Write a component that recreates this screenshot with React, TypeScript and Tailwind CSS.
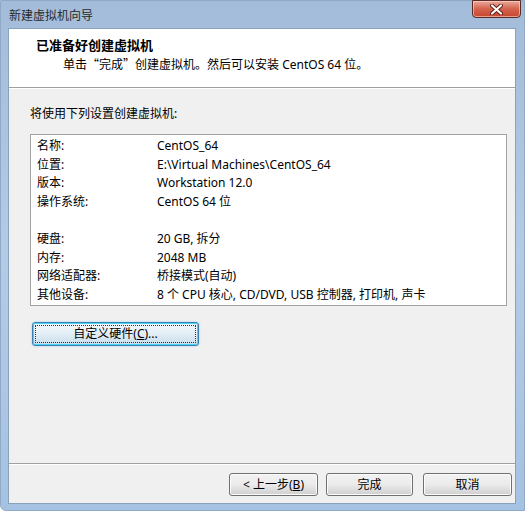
import React from "react";

const FONT = { fontFamily: '"Noto Sans", "Noto Sans CJK SC", sans-serif' };
const CJK = { fontFamily: '"Noto Sans CJK SC", sans-serif' };

const rows: [string, string][] = [
  ["名称:", "CentOS_64"],
  ["位置:", "E:\\Virtual Machines\\CentOS_64"],
  ["版本:", "Workstation 12.0"],
  ["操作系统:", "CentOS 64 位"],
];

const rows2: [string, string][] = [
  ["硬盘:", "20 GB, 拆分"],
  ["内存:", "2048 MB"],
  ["网络适配器:", "桥接模式(自动)"],
  ["其他设备:", "8 个 CPU 核心, CD/DVD, USB 控制器, 打印机, 声卡"],
];

function InfoRow({ label, value }: { label: string; value: string }) {
  return (
    <div className="flex h-[18.5px] items-center">
      <span className="w-[120px] shrink-0">{label}</span>
      <span className="whitespace-nowrap">{value}</span>
    </div>
  );
}

function WizButton({ children }: { children: React.ReactNode }) {
  return (
    <button className="h-[23px] rounded-[3px] border border-[#707070] bg-gradient-to-b from-[#f2f2f2] via-[#ebebeb] to-[#cfcfcf] text-[12px] leading-none text-black shadow-[inset_0_0_0_1px_#fcfcfc]">
      {children}
    </button>
  );
}

export default function App() {
  return (
    <div className="relative h-[519px] w-[525px] overflow-hidden bg-white text-[12px] text-black" style={FONT}>
      <div className="flex h-[511px] w-[525px] flex-col rounded-bl-[6px] border border-[#8fa9c6] bg-gradient-to-b from-[#a3bcd9] via-[#b3cbe5] to-[#a6c2e2] pb-[6px] pl-[7px] pr-[8px]">
        {/* title bar */}
        <div className="relative flex h-[27px] shrink-0 items-center">
          <span className="pl-[1px] pt-[2px] text-[12px] text-[#2a2a2a]">新建虚拟机向导</span>
          <div className="absolute right-[-5px] top-[-1px] flex h-[18px] w-[49px] items-center justify-center rounded-b-[4px] border border-[#5a2a24] bg-gradient-to-b from-[#e9a99c] via-[#d4624d] to-[#c8452e] shadow-[inset_0_0_0_1px_rgba(255,220,210,0.6)]">
            <svg width="13" height="11" viewBox="0 0 13 11">
              <path d="M2 1.5 L11 9.5 M11 1.5 L2 9.5" stroke="#5b1c14" strokeWidth="4" strokeLinecap="round" />
              <path d="M2 1.5 L11 9.5 M11 1.5 L2 9.5" stroke="#ffffff" strokeWidth="2.2" strokeLinecap="round" />
            </svg>
          </div>
        </div>

        {/* client area */}
        <div className="flex flex-1 flex-col border border-[#8aa2bd] bg-[#f0f0f0]">
          <div className="flex h-[59px] shrink-0 flex-col border-b border-[#a0a0a0] bg-white pl-[27px] pt-[6px] shadow-[0_1px_0_#ffffff]">
            <div className="text-[13px] font-bold leading-[20px]">已准备好创建虚拟机</div>
            <div className="pl-[27px] text-[12px] leading-[18px]">
              单击<span style={CJK}>“</span>完成<span style={CJK}>”</span>创建虚拟机。然后可以安装 CentOS 64 位。
            </div>
          </div>

          <div className="flex flex-1 flex-col px-[21px] pr-[8px]">
            <div className="pt-[17px] leading-[18px]">将使用下列设置创建虚拟机:</div>
            <div className="mt-[11px] flex h-[172px] flex-col border border-[#a3a3a3] bg-white pl-[6px] pt-[2px]">
              {rows.map(([l, v]) => (
                <InfoRow key={l} label={l} value={v} />
              ))}
              <div className="h-[19px]" />
              {rows2.map(([l, v]) => (
                <InfoRow key={l} label={l} value={v} />
              ))}
            </div>
            <div className="mt-[16px] flex">
              <button className="ml-[2px] flex h-[24px] w-[167px] items-center justify-center rounded-[3px] border border-[#3c7fb1] bg-gradient-to-b from-[#f4f9fc] via-[#e2eef6] to-[#c7dcea] p-[2px] shadow-[0_0_2px_#8cc8ee,inset_0_0_0_1px_#48d2f7]">
                <span className="flex h-full w-full items-center justify-center border border-dotted border-[#333]">
                  自定义硬件(<span className="underline">C</span>)...
                </span>
              </button>
            </div>
          </div>

          <div className="h-[2px] shrink-0 border-t border-[#a0a0a0] bg-white" />
          <div className="flex h-[38px] shrink-0 items-start justify-end gap-[10px] pr-[3px] pt-[8px]">
            <div className="w-[87px]">
              <WizButton>
                <span className="block w-[87px]">
                  &lt; 上一步(<span className="underline">B</span>)
                </span>
              </WizButton>
            </div>
            <div className="w-[87px]">
              <WizButton>
                <span className="block w-[85px]">完成</span>
              </WizButton>
            </div>
            <div className="w-[89px]">
              <WizButton>
                <span className="block w-[87px]">取消</span>
              </WizButton>
            </div>
          </div>
        </div>
      </div>
    </div>
  );
}
